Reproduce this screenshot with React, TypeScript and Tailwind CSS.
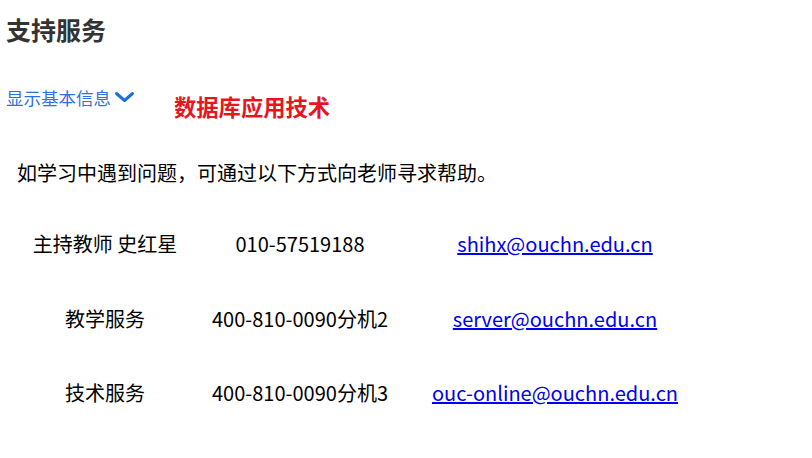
const rows = [
    { name: '主持教师 史红星', phone: '010-57519188', email: 'shihx@ouchn.edu.cn' },
    { name: '教学服务', phone: '400-810-0090分机2', email: 'server@ouchn.edu.cn' },
    { name: '技术服务', phone: '400-810-0090分机3', email: 'ouc-online@ouchn.edu.cn' },
];

const App = () => {
    return (
        <div className="h-[458px] w-[812px] bg-white font-['Noto_Sans_CJK_SC',sans-serif] text-black">
            <h2 className="px-[6px] pt-[12px] text-[25px] font-bold leading-[34px] text-[#333]">
                支持服务
            </h2>

            <div className="mt-[40px] flex items-start px-[6px]">
                <button className="flex items-center gap-[3px] text-[17.5px] leading-[24px] text-[#2f6fe4]">
                    显示基本信息
                    <svg width="21" height="12" viewBox="0 0 21 12" className="mb-[3px]">
                        <polyline
                            points="2.5,2.5 10.5,9.5 18.5,2.5"
                            fill="none"
                            stroke="#1a6fe0"
                            strokeWidth="3"
                            strokeLinecap="round"
                            strokeLinejoin="round"
                        />
                    </svg>
                </button>
                <div className="ml-[39px] mt-[5px] text-[22.3px] font-bold leading-[30px] text-[#e8141e]">
                    数据库应用技术
                </div>
            </div>

            <p className="ml-[17px] mt-[38px] text-[20px] leading-[28px]">
                如学习中遇到问题，可通过以下方式向老师寻求帮助。
            </p>

            <table className="ml-[16px] mt-[20px] border-collapse text-[20px]">
                <tbody>
                    {rows.map((row) => (
                        <tr key={row.email} className="h-[74.5px]">
                            <td className="w-[178px] text-center">{row.name}</td>
                            <td className="w-[212px] text-center">{row.phone}</td>
                            <td className="w-[298px] text-center">
                                <a href="#" className="text-[#0000ee] underline">
                                    {row.email}
                                </a>
                            </td>
                        </tr>
                    ))}
                </tbody>
            </table>
        </div>
    );
};

export default App;
